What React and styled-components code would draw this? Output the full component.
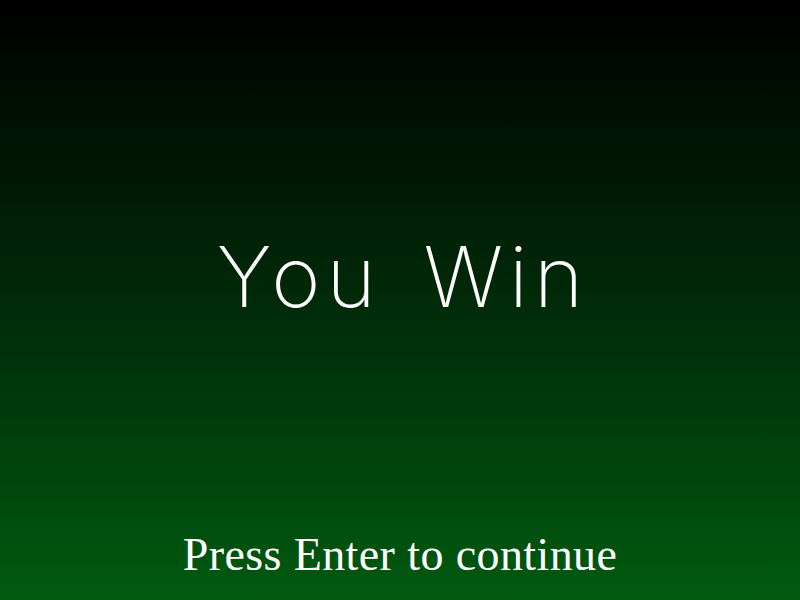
import React from "react";
import styled, { createGlobalStyle } from "styled-components";

const Global = createGlobalStyle`
  html, body { margin: 0; padding: 0; background: #000; }
  body { overflow: hidden; }
`;

const Screen = styled.div`
  width: 800px;
  height: 600px;
  display: flex;
  flex-direction: column;
  align-items: center;
  background: linear-gradient(to bottom, #000000 0%, #002a08 50%, #005a10 100%);
`;

const Title = styled.h1`
  margin: 227px 0 0 0;
  font-family: "Inter", "Lato", sans-serif;
  font-weight: 200;
  font-size: 84px;
  line-height: 100px;
  letter-spacing: 6px;
  word-spacing: 12px;
  color: #ffffff;
  padding-left: 6px;
`;

const Spacer = styled.div`
  flex: 1;
`;

const Prompt = styled.p`
  margin: 0 0 20px 0;
  font-family: "Liberation Serif", "DejaVu Serif", serif;
  font-size: 46px;
  line-height: 50px;
  letter-spacing: 0.4px;
  color: #ffffff;
`;

export default function App() {
  return (
    <>
      <Global />
      <Screen>
        <Title>You Win</Title>
        <Spacer />
        <Prompt>Press Enter to continue</Prompt>
      </Screen>
    </>
  );
}
